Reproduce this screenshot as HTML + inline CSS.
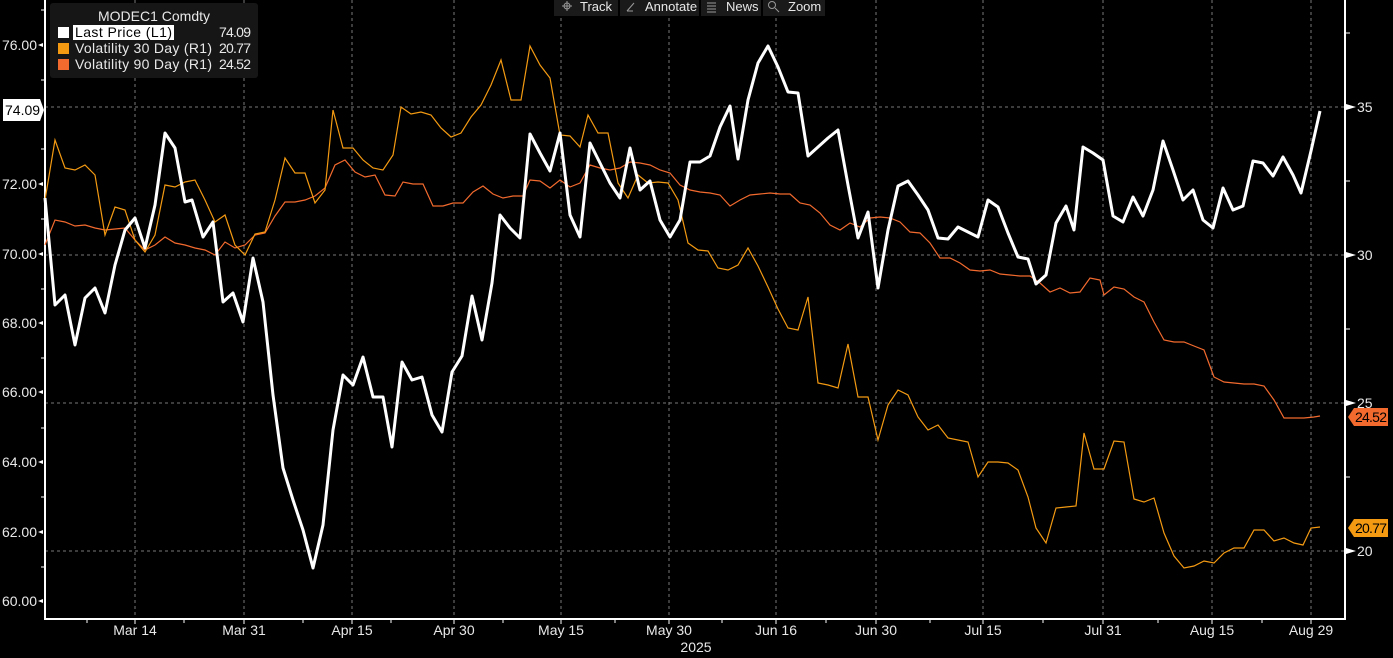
<!DOCTYPE html>
<html><head><meta charset="utf-8"><style>
html,body{margin:0;padding:0;background:#000;width:1393px;height:658px;overflow:hidden}
svg{display:block;font-family:"Liberation Sans",sans-serif}
</style></head><body>
<svg width="1393" height="658" viewBox="0 0 1393 658" xml:space="preserve">
<g stroke="#777" stroke-width="1" stroke-dasharray="3,3" fill="none">
<line x1="135" y1="0" x2="135" y2="619"/><line x1="244" y1="0" x2="244" y2="619"/><line x1="352" y1="0" x2="352" y2="619"/><line x1="454" y1="0" x2="454" y2="619"/><line x1="561" y1="0" x2="561" y2="619"/><line x1="669" y1="0" x2="669" y2="619"/><line x1="776" y1="0" x2="776" y2="619"/><line x1="876" y1="0" x2="876" y2="619"/><line x1="983" y1="0" x2="983" y2="619"/><line x1="1103" y1="0" x2="1103" y2="619"/><line x1="1212" y1="0" x2="1212" y2="619"/><line x1="1311" y1="0" x2="1311" y2="619"/>
<line x1="45" y1="107" x2="1345" y2="107"/><line x1="45" y1="255" x2="1345" y2="255"/><line x1="45" y1="403" x2="1345" y2="403"/><line x1="45" y1="551" x2="1345" y2="551"/>
</g>
<g stroke="#fff" stroke-width="2" fill="none">
<line x1="45" y1="0" x2="45" y2="620"/><line x1="1345" y1="0" x2="1345" y2="620"/><line x1="44" y1="619" x2="1346" y2="619"/>
</g>
<g stroke="#fff" stroke-width="1">
<line x1="41" y1="10" x2="45" y2="10"/><line x1="41" y1="80" x2="45" y2="80"/><line x1="41" y1="149" x2="45" y2="149"/><line x1="41" y1="219" x2="45" y2="219"/><line x1="41" y1="289" x2="45" y2="289"/><line x1="41" y1="358" x2="45" y2="358"/><line x1="41" y1="428" x2="45" y2="428"/><line x1="41" y1="497" x2="45" y2="497"/><line x1="41" y1="567" x2="45" y2="567"/>
<line x1="1345" y1="33" x2="1350" y2="33"/><line x1="1345" y1="181" x2="1350" y2="181"/><line x1="1345" y1="329" x2="1350" y2="329"/><line x1="1345" y1="477" x2="1350" y2="477"/>
<line x1="87" y1="619" x2="87" y2="623"/><line x1="184" y1="619" x2="184" y2="623"/><line x1="303" y1="619" x2="303" y2="623"/><line x1="391" y1="619" x2="391" y2="623"/><line x1="503" y1="619" x2="503" y2="623"/><line x1="615" y1="619" x2="615" y2="623"/><line x1="722" y1="619" x2="722" y2="623"/><line x1="826" y1="619" x2="826" y2="623"/><line x1="930" y1="619" x2="930" y2="623"/><line x1="1043" y1="619" x2="1043" y2="623"/><line x1="1158" y1="619" x2="1158" y2="623"/><line x1="1262" y1="619" x2="1262" y2="623"/>
<line x1="135" y1="619" x2="135" y2="624"/><line x1="244" y1="619" x2="244" y2="624"/><line x1="352" y1="619" x2="352" y2="624"/><line x1="454" y1="619" x2="454" y2="624"/><line x1="561" y1="619" x2="561" y2="624"/><line x1="669" y1="619" x2="669" y2="624"/><line x1="776" y1="619" x2="776" y2="624"/><line x1="876" y1="619" x2="876" y2="624"/><line x1="983" y1="619" x2="983" y2="624"/><line x1="1103" y1="619" x2="1103" y2="624"/><line x1="1212" y1="619" x2="1212" y2="624"/><line x1="1311" y1="619" x2="1311" y2="624"/>
</g>
<polyline fill="none" stroke="#f26a2e" stroke-width="1.2" points="45,245 55,220 65,222 75,226 85,225 95,228 105,230 125,228 135,240 145,250 155,245 165,237 175,243 185,245 195,248 205,250 215,255 225,242 235,248 245,245 255,235 265,233 275,216 285,202 295,202 305,200 315,196 325,188 335,165 345,160 355,172 365,177 375,175 385,195 395,196 403,182 413,184 423,184 433,206 443,206 453,203 463,203 473,192 483,186 493,194 503,198 513,196 523,196 530,180 540,181 550,188 560,180 570,187 580,183 590,165 600,168 610,170 620,168 630,162 640,163 650,165 660,170 670,173 680,185 690,190 700,192 710,193 720,195 730,206 740,200 750,195 760,194 770,193 780,194 790,194 800,203 810,205 820,213 830,225 840,230 850,223 860,227 870,218 880,217 890,218 900,222 910,232 920,233 930,243 940,258 950,258 960,263 970,270 980,271 990,270 1000,274 1010,275 1020,276 1030,276 1040,283 1050,292 1060,288 1070,293 1080,292 1090,278 1100,280 1104,295 1114,287 1124,289 1134,297 1144,302 1154,322 1164,340 1174,342 1184,342 1194,346 1204,350 1214,377 1224,382 1234,383 1244,384 1254,384 1264,386 1274,400 1284,418 1294,418 1304,418 1314,417 1320,416"/>
<polyline fill="none" stroke="#f39a12" stroke-width="1.2" points="45,200 55,140 65,168 75,170 85,165 95,175 105,235 115,207 125,210 135,240 145,252 155,235 165,185 175,187 185,182 195,180 205,200 215,222 225,215 235,245 245,255 255,234 265,232 275,200 285,158 295,173 305,173 315,203 325,190 333,110 343,148 353,148 363,160 373,168 383,170 393,155 401,107 411,114 421,112 431,115 441,128 451,137 461,133 471,117 481,105 491,85 501,60 511,100 521,100 530,46 540,65 550,78 560,135 570,136 580,147 588,115 598,133 608,133 618,183 628,198 638,175 648,183 658,182 668,183 678,200 688,243 698,250 708,251 718,268 728,270 738,265 748,248 758,266 768,287 778,309 788,328 798,330 808,297 818,383 828,385 838,388 848,344 858,397 868,397 878,440 888,405 898,390 908,395 918,417 928,430 938,425 948,438 958,440 968,442 978,477 988,462 998,462 1008,463 1018,470 1028,497 1036,528 1046,543 1056,508 1066,507 1076,506 1084,433 1094,469 1104,469 1114,441 1124,442 1134,499 1144,502 1154,498 1164,533 1174,556 1184,568 1194,566 1204,561 1214,563 1224,553 1234,548 1244,548 1254,530 1264,530 1274,541 1284,538 1294,543 1303,545 1311,528 1320,527"/>
<polyline fill="none" stroke="#fff" stroke-width="3" stroke-linejoin="round" points="45,198 55,305 65,295 75,345 85,298 95,288 105,313 115,265 125,230 135,218 145,248 155,205 165,133 175,148 185,202 192,200 203,237 213,222 223,302 233,293 243,322 253,258 263,302 273,395 283,468 293,500 303,530 313,568 323,525 333,430 343,375 353,385 363,357 373,397 383,397 392,447 402,362 412,380 422,377 432,415 442,432 452,372 462,356 472,296 482,340 492,283 500,215 510,228 520,238 530,134 540,153 550,171 560,133 570,215 580,237 590,143 600,163 610,183 620,198 630,148 640,190 650,181 660,220 670,237 680,220 690,162 700,162 710,156 720,127 730,106 738,159 748,100 758,63 768,46 778,67 788,92 798,93 808,156 818,147 828,138 838,130 848,185 858,238 868,212 878,288 888,230 898,186 908,181 918,195 928,210 938,238 948,239 958,227 968,232 978,237 988,200 998,207 1008,233 1018,257 1028,259 1036,284 1046,275 1056,223 1066,206 1074,230 1083,147 1093,153 1103,160 1113,216 1123,222 1133,197 1143,216 1153,190 1163,141 1173,170 1183,200 1193,190 1203,220 1213,228 1223,188 1233,210 1243,206 1253,161 1263,163 1273,176 1283,157 1293,175 1301,193 1311,151 1320,111"/>
<g fill="#e8e8e8" font-size="14" text-anchor="end">
<text x="37" y="50">76.00</text><text x="37" y="189">72.00</text><text x="37" y="259">70.00</text><text x="37" y="328">68.00</text><text x="37" y="397">66.00</text><text x="37" y="467">64.00</text><text x="37" y="537">62.00</text><text x="37" y="606">60.00</text>
</g>
<g fill="#fff">
<polygon points="38,45 43,43 43,47"/><polygon points="38,184 43,182 43,186"/><polygon points="38,254 43,252 43,256"/><polygon points="38,323 43,321 43,325"/><polygon points="38,392 43,390 43,394"/><polygon points="38,462 43,460 43,464"/><polygon points="38,532 43,530 43,534"/><polygon points="38,601 43,599 43,603"/>
<polygon points="1346,104 1346,110 1356,107"/><polygon points="1346,252 1346,258 1356,255"/><polygon points="1346,400 1346,406 1356,403"/><polygon points="1346,548 1346,554 1356,551"/>
<path d="M3,99 H40 L44,110 L40,121 H3 Z"/>
</g>
<text x="5" y="115" font-size="14" fill="#000">74.09</text>
<g fill="#e8e8e8" font-size="14">
<text x="1357" y="112">35</text><text x="1357" y="260">30</text><text x="1357" y="408">25</text><text x="1357" y="556">20</text>
</g>
<path d="M1348,417 L1354,408 H1388 V426 H1354 Z" fill="#f26a2e"/>
<text x="1355" y="422" font-size="14" fill="#000" textLength="32">24.52</text>
<path d="M1348,528 L1354,519 H1388 V537 H1354 Z" fill="#f39a12"/>
<text x="1355" y="533" font-size="14" fill="#000" textLength="32">20.77</text>
<g fill="#e8e8e8" font-size="14" text-anchor="middle">
<text x="135" y="635">Mar 14</text><text x="244" y="635">Mar 31</text><text x="352" y="635">Apr 15</text><text x="454" y="635">Apr 30</text><text x="561" y="635">May 15</text><text x="669" y="635">May 30</text><text x="776" y="635">Jun 16</text><text x="876" y="635">Jun 30</text><text x="983" y="635">Jul 15</text><text x="1103" y="635">Jul 31</text><text x="1212" y="635">Aug 15</text><text x="1311" y="635">Aug 29</text>
<text x="696" y="652">2025</text>
</g>
<rect x="50" y="3" width="208" height="75" rx="3" fill="#161616"/>
<g font-size="14" fill="#e8e8e8">
<text x="154" y="21" text-anchor="middle">MODEC1 Comdty</text>
<rect x="58" y="27" width="11" height="11" fill="#fff"/>
<rect x="73" y="25" width="101" height="15" fill="#fff"/>
<text x="75" y="37" fill="#000" textLength="97">Last Price  (L1)</text>
<text x="219" y="37" textLength="32">74.09</text>
<rect x="58" y="43" width="11" height="11" fill="#f39a12"/>
<text x="75" y="53" textLength="137">Volatility 30 Day  (R1)</text><text x="219" y="53" textLength="32">20.77</text>
<rect x="58" y="59" width="11" height="11" fill="#f26a2e"/>
<text x="75" y="69" textLength="137">Volatility 90 Day  (R1)</text><text x="219" y="69" textLength="32">24.52</text>
</g>
<g font-size="13" fill="#e8e8e8">
<rect x="554" y="0" width="64" height="16" fill="#1a1a1a"/>
<rect x="620" y="0" width="79" height="16" fill="#1a1a1a"/>
<rect x="701" y="0" width="60" height="16" fill="#1a1a1a"/>
<rect x="763" y="0" width="62" height="16" fill="#1a1a1a"/>
<g stroke="#999" stroke-width="1" fill="none">
<circle cx="567" cy="6" r="3"/><line x1="562" y1="6" x2="572" y2="6"/><line x1="567" y1="1" x2="567" y2="11"/>
<line x1="627" y1="11" x2="634" y2="3"/><line x1="627" y1="11" x2="633" y2="11"/>
<line x1="707" y1="3" x2="716" y2="3"/><line x1="707" y1="6" x2="716" y2="6"/><line x1="707" y1="9" x2="716" y2="9"/><line x1="707" y1="12" x2="716" y2="12"/>
<circle cx="772" cy="5" r="3.5"/><line x1="775" y1="8" x2="779" y2="12"/>
</g>
<text x="580" y="11">Track</text><text x="645" y="11">Annotate</text><text x="726" y="11">News</text><text x="788" y="11">Zoom</text>
</g>
</svg>
</body></html>
